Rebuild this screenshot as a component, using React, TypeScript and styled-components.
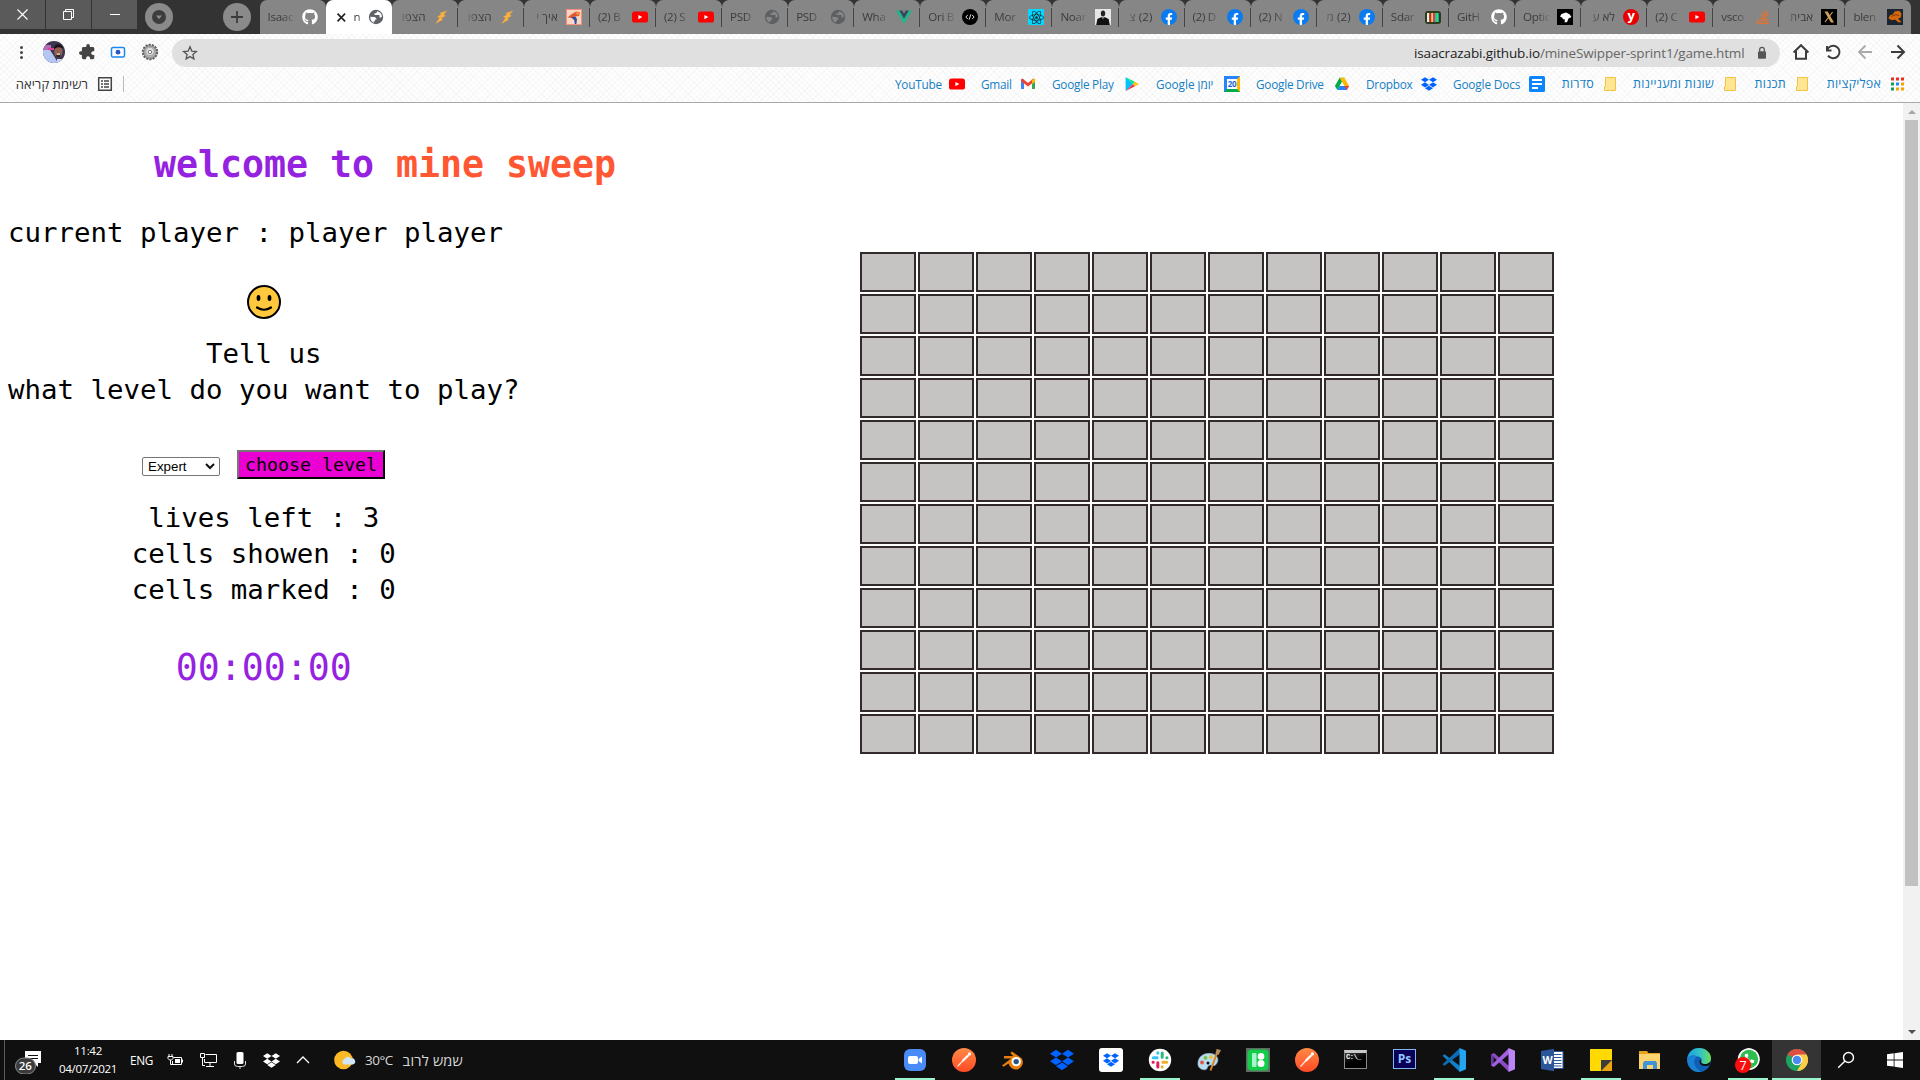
import React from 'react';
import styled, { createGlobalStyle, css } from 'styled-components';
import { FaGithub, FaFacebookF, FaReact, FaDropbox, FaStackOverflow } from 'react-icons/fa';

const ui = `"Open Sans", "Noto Sans", "DejaVu Sans", sans-serif`;
const mono = `Consolas, "DejaVu Sans Mono", monospace`;

const GlobalStyle = createGlobalStyle`
  * { box-sizing: border-box; }
  html, body { margin: 0; padding: 0; background: #fff; }
  body { width: 1920px; height: 1080px; overflow: hidden; }
  svg { display: block; flex: none; }
`;

const Screen = styled.div`
  width: 1920px;
  height: 1080px;
  display: flex;
  flex-direction: column;
  font-family: ${ui};
  overflow: hidden;
`;

/* ---------- window frame and tabs ---------- */

const TabStrip = styled.div`
  height: 34px;
  display: flex;
  background: #333;
`;
const FrameButtons = styled.div`
  display: flex;
  gap: 1px;
  width: 137px;
  height: 29px;
`;
const FrameButton = styled.div`
  flex: 1;
  display: flex;
  align-items: center;
  justify-content: center;
  background: #5a5a5a;
`;
const RoundButtons = styled.div`
  width: 122px;
  display: flex;
  justify-content: space-between;
  padding: 3px 8px;
`;
const RoundButton = styled.div`
  width: 28px;
  height: 28px;
  border-radius: 50%;
  background: #8a8a8a;
  display: flex;
  align-items: center;
  justify-content: center;
`;
const Tabs = styled.div`
  display: flex;
  width: 1652px;
  margin-left: 0.5px;
`;
const Tab = styled.div<{ $active?: boolean; $line?: boolean }>`
  flex: 1 1 0;
  min-width: 0;
  height: 34px;
  display: flex;
  align-items: center;
  justify-content: space-between;
  padding: 0 8px 0 8px;
  border-radius: 7px 7px 0 0;
  background: ${p => (p.$active ? '#fff' : '#868686')};
  ${p =>
    p.$line &&
    css`
      background: linear-gradient(#444, #444) 100% 8px / 1px 19px no-repeat, #868686;
    `}
`;
const TabTitle = styled.div<{ $rtl?: boolean; $w?: number }>`
  width: ${p => p.$w ?? 26}px;
  font-size: 11.6px;
  letter-spacing: ${p => (p.$rtl ? 0.1 : -0.3)}px;
  line-height: 18px;
  white-space: nowrap;
  color: #3c3c3c;
  direction: ${p => (p.$rtl ? 'rtl' : 'ltr')};
  mask-image: linear-gradient(${p => (p.$rtl ? 'to left' : 'to right')}, #000 55%, transparent 110%);
`;

/* ---------- toolbar ---------- */

const Chrome = styled.div`
  height: 69px;
  border-bottom: 1px solid #a9a9a9;
  background:
    repeating-linear-gradient(45deg, rgba(0, 0, 0, 0.025) 0 1px, transparent 1px 4px),
    repeating-linear-gradient(-45deg, rgba(0, 0, 0, 0.025) 0 1px, transparent 1px 4px),
    #fefefe;
`;
const Toolbar = styled.div`
  height: 36px;
  display: flex;
  align-items: center;
  padding: 0 14px 0 13px;
`;
const ToolbarLeft = styled.div`
  width: 159px;
  display: flex;
  align-items: center;
  gap: 14px;
`;
const Dots = styled.div`
  width: 16px;
  display: flex;
  flex-direction: column;
  align-items: center;
  gap: 2px;
`;
const Dot = styled.i`
  width: 3px;
  height: 3px;
  border-radius: 50%;
  background: #444;
`;
const Omnibox = styled.div`
  width: 1608px;
  height: 28px;
  margin-top: 2px;
  border-radius: 14px;
  background: #e0e0e0;
  display: flex;
  align-items: center;
  padding: 0 11px 0 10px;
`;
const Url = styled.div`
  margin-left: auto;
  margin-right: 11px;
  width: 330px;
  font-size: 13.5px;
  letter-spacing: -0.14px;
  line-height: 18px;
  padding-bottom: 1px;
  color: #666;
  white-space: nowrap;
  b { font-weight: 400; color: #222; }
`;
const ToolbarRight = styled.div`
  flex: 1;
  display: flex;
  align-items: center;
  justify-content: flex-end;
  gap: 14px;
`;
const Bookmarks = styled.div`
  height: 32px;
  display: flex;
  align-items: center;
  justify-content: flex-end;
  gap: 16px;
  padding: 0 15px 2px 14px;
  margin-top: -1px;
`;
const ReadingList = styled.div`
  display: flex;
  align-items: center;
  margin-right: auto;
  gap: 9px;
  font-size: 12px;
  color: #333;
`;
const Divider = styled.i`
  width: 1px;
  height: 16px;
  margin-left: 1px;
  background: #bbb;
`;
const Bookmark = styled.div`
  display: flex;
  align-items: center;
  gap: 8px;
`;
const Label = styled.span<{ $w: number; $rtl?: boolean; $ls?: number; $fs?: number }>`
  width: ${p => p.$w}px;
  font-size: ${p => p.$fs ?? (p.$rtl ? 12.5 : 11.8)}px;
  letter-spacing: ${p => p.$ls ?? (p.$rtl ? 0.2 : -0.25)}px;
  line-height: 16px;
  white-space: nowrap;
  direction: ${p => (p.$rtl ? 'rtl' : 'ltr')};
  color: ${p => (p.$fs ? '#333' : '#1580c4')};
`;

/* ---------- page ---------- */

const Page = styled.div`
  height: 937px;
  display: flex;
  background: #fff;
  font-family: ${mono};
  color: #000;
`;
const Side = styled.div`
  width: 860px;
  padding: 38px 0 0 8px;
`;
const Title = styled.h1`
  margin: 0;
  padding-left: 146px;
  font-size: 36.55px;
  line-height: 48px;
  color: #9522e0;
  white-space: nowrap;
  span { color: #ff5733; }
`;
const Player = styled.div`
  margin-top: 26px;
  font-size: 27.41px;
  line-height: 36px;
  white-space: nowrap;
`;
const Centered = styled.div<{ $top: number }>`
  width: 511.5px;
  margin-top: ${p => p.$top}px;
  display: flex;
  flex-direction: column;
  align-items: center;
  font-size: 27.41px;
  line-height: 36px;
  white-space: pre;
`;
const Controls = styled.div`
  width: 511.5px;
  margin-top: 42px;
  padding-left: 134px;
  height: 29px;
  display: flex;
  align-items: flex-start;
  gap: 17px;
`;
const Select = styled.div`
  width: 78px;
  height: 19px;
  margin-top: 7px;
  padding: 0 4px 0 5px;
  border: 1px solid #767676;
  border-radius: 2px;
  display: flex;
  align-items: center;
  justify-content: space-between;
  font: 13.33px "Liberation Sans", Arial, sans-serif;
`;
const LevelButton = styled.button`
  width: 148px;
  height: 29px;
  padding: 0;
  border: 2px outset #767676;
  border-color: #767676 #2c2c2c #2c2c2c #767676;
  border-radius: 0;
  background: #eb00d3;
  color: #000;
  font-family: ${mono};
  font-size: 18.27px;
  line-height: 24px;
`;
const Timer = styled.div`
  width: 511.5px;
  margin-top: 36px;
  text-align: center;
  font-size: 36.55px;
  line-height: 48px;
  color: #9522e0;
`;
const BoardArea = styled.div`
  flex: 1;
  padding-top: 149px;
`;
const Board = styled.div`
  display: grid;
  grid-template-columns: repeat(12, 56px);
  grid-auto-rows: 40px;
  gap: 2px;
`;
const Cell = styled.div`
  border: 2px solid #332b2b;
  background: #c6c4c2;
`;
const ScrollBar = styled.div`
  width: 17px;
  display: flex;
  flex-direction: column;
  align-items: center;
  justify-content: space-between;
  background: #f1f1f1;
`;
const ScrollTop = styled.div`
  display: flex;
  flex-direction: column;
  align-items: center;
`;
const Arrow = styled.div`
  height: 17px;
  display: flex;
  align-items: center;
`;
const Thumb = styled.div`
  width: 13px;
  height: 766px;
  background: #c1c1c1;
`;

/* ---------- taskbar ---------- */

const Taskbar = styled.div`
  height: 40px;
  display: flex;
  background: #101010;
  color: #fff;
`;
const Tray = styled.div`
  width: 890px;
  margin-left: 4px;
  border-left: 1px solid #5b5b5b;
  display: flex;
  align-items: center;
`;
const Notice = styled.div`
  width: 44px;
  padding-left: 9px;
`;
const Clock = styled.div`
  width: 74px;
  text-align: center;
  font-size: 11.6px;
  letter-spacing: -0.35px;
  line-height: 18px;
  padding-bottom: 1px;
  margin-left: 2px;
`;
const Lang = styled.div`
  width: 42px;
  padding-left: 5px;
  font-size: 11.8px;
  letter-spacing: -0.35px;
`;
const TrayIcons = styled.div`
  display: flex;
  align-items: center;
  gap: 16px;
`;
const Weather = styled.div`
  display: flex;
  align-items: center;
  margin-left: 24px;
  font-size: 13.5px;
  letter-spacing: -0.5px;
  color: #d8d8d8;
`;
const Degrees = styled.span`
  width: 29px;
  margin: 0 8px 0 9px;
`;
const Forecast = styled.span`
  direction: rtl;
  font-size: 14.5px;
  letter-spacing: 0.2px;
  width: 61px;
  margin-top: 1px;
  white-space: nowrap;
`;
const Apps = styled.div`
  display: flex;
  width: 1029px;
  margin-left: -4px;
`;
const AppSlot = styled.div<{ $open?: boolean; $current?: boolean }>`
  width: 49px;
  height: 40px;
  display: flex;
  align-items: center;
  justify-content: center;
  background:
    linear-gradient(#9df5cf, #9df5cf) 50% 100% / ${p => (p.$current ? 49 : p.$open ? 40 : 0)}px 2px no-repeat,
    ${p => (p.$current ? '#343434' : 'transparent')};
`;

/* ---------- icons ---------- */

const Globe = ({ c = '#5f6368', land = '#fff' }) => (
  <svg width="16" height="16" viewBox="0 0 16 16">
    <circle cx="8" cy="8" r="7.2" fill={c} />
    <path d="M2.300 7.800 6.500 8q2.300.6 2 2.400H7v1.800H5.800v1.500A6 6 0 0 1 2.300 7.800ZM9.200 2.300l-1 1.900H6.500V6h5v2.600h1.600l.8-1A6 6 0 0 0 9.200 2.300Z" fill={land} />
  </svg>
);
const Bolt = () => (
  <svg width="16" height="16" viewBox="0 0 16 16">
    <path d="M13.4 1.6 5.8 4.1l1.2 1.6-3.8 1.8 2.2 1.6L1.4 14.8l7.4-4.1-1.3-1.6 4.2-2-2-1.6Z" fill="#fbb03b" />
  </svg>
);
const YouTube = () => (
  <svg width="16" height="16" viewBox="0 0 16 16">
    <rect y="2.6" width="16" height="11" rx="2.6" fill="#f00" />
    <path d="M6.4 5.9v4.4l3.9-2.2Z" fill="#fff" />
  </svg>
);
const Vue = () => (
  <svg width="16" height="16" viewBox="0 0 16 16">
    <path d="M0 1.6h3.2L8 9.8l4.8-8.2H16L8 15Z" fill="#1fb88a" />
    <path d="M3.2 1.6h3L8 4.6l1.8-3h3L8 9.8Z" fill="#34495e" />
  </svg>
);
const Fox = () => (
  <svg width="16" height="16" viewBox="0 0 16 16">
    <rect width="16" height="16" fill="#f6907c" />
    <rect x="1" y="1" width="14" height="14" fill="#fbd5c4" />
    <path d="M1.500 8.600 6 5l4-2.500 4 1L13 7l-4 .5L6 9Z" fill="#e2562b" />
    <path d="M9 3.500h4.500L12 6.500Z" fill="#f59b35" />
    <path d="M5 8.500 9.400 7.500 11 10l-.6 5H8.800l-.6-4Z" fill="#2b4f9e" />
  </svg>
);
const CodeDot = () => (
  <svg width="16" height="16" viewBox="0 0 16 16">
    <circle cx="8" cy="8" r="8" fill="#000" />
    <path d="M5.8 5.9 3.9 8l1.9 2.1M10.2 5.9 12.1 8l-1.9 2.1M8.8 5.4 7.2 10.6" stroke="#ddd" fill="none" />
  </svg>
);
const IconTile = styled.div<{ $bg: string; $c: string; $round?: boolean }>`
  width: 16px;
  height: 16px;
  flex: none;
  display: flex;
  align-items: center;
  justify-content: center;
  border-radius: ${p => (p.$round ? '50%' : '1px')};
  background: ${p => p.$bg};
  color: ${p => p.$c};
  overflow: hidden;
`;
const ReactTile = () => (
  <IconTile $bg="#00d8ff" $c="#17222b"><FaReact size={15} /></IconTile>
);
const FacebookTile = styled(IconTile)`
  padding-top: 3px;
`;
const Facebook = () => (
  <FacebookTile $bg="#0a7cf0" $c="#fff" $round><FaFacebookF size={12} /></FacebookTile>
);
const Person = () => (
  <svg width="16" height="16" viewBox="0 0 16 16">
    <rect width="16" height="16" fill="#e6e6e6" />
    <ellipse cx="8" cy="4.600" rx="2.200" ry="3" fill="#222" />
    <path d="M1.2 16 2.400 10 6 8.200h4l3.600 1.800 1.200 6Z" fill="#111" />
    <path d="M7.3 8.2h1.4L8 10.6Z" fill="#eee" />
  </svg>
);
const Tv = () => (
  <svg width="16" height="16" viewBox="0 0 16 16">
    <rect y="2" width="16" height="13" rx="3" fill="#2c3b1c" />
    <path d="M2 4h2.4v9H2Z" fill="#eee" /><path d="M4.4 4h1.8v9H4.4Z" fill="#e02020" /><path d="M6.2 4H8v9H6.2Z" fill="#e8e020" /><path d="M8 4h2v9H8Z" fill="#e020c0" /><path d="M10 4h2v9h-2Z" fill="#2ad82a" /><path d="M12 4h1.6v9H12Z" fill="#20d8d8" />
  </svg>
);
const Leaf = () => (
  <svg width="16" height="16" viewBox="0 0 16 16">
    <rect width="16" height="16" fill="#000" />
    <path d="M3 7.600 4.500 5 9 3.500l3.500 1.800L14.500 8l-3 1.500-1.500 3.700H7.500L8 10.500l-2-.3-.6-1.400Z" fill="#fff" />
  </svg>
);
const YTile = styled.div`
  width: 16px;
  height: 16px;
  flex: none;
  border-radius: 50%;
  background: #e60000;
  color: #fff;
  text-align: center;
  font: bold 13px/13px "Open Sans", sans-serif;
`;
const XTile = () => (
  <svg width="16" height="16" viewBox="0 0 16 16">
    <rect width="16" height="16" fill="#000" />
    <path d="M4.500 3h1.800L12 13h-1.800ZM11.6 3 4 13" stroke="#d5a45c" strokeWidth="1.100" fill="#d5a45c" />
  </svg>
);
const BlendTile = () => (
  <svg width="16" height="16" viewBox="0 0 16 16">
    <rect width="16" height="16" fill="#1c2430" />
    <path d="M1.400 9.600 3 6.200l3-1 1.500-2.800 4.500-.6 2.400 2.400-.4 4-3 1.600 3.600 3.200-3 .4L8 10.600l-3 .6Z" fill="#d3690c" />
    <path d="M4.4 7.400 9 5.600l3 1" stroke="#843a04" fill="none" />
  </svg>
);
const GitHub = () => <FaGithub size={16} color="#fff" />;
const StackOverflow = () => <FaStackOverflow size={16} color="#e8722a" />;

const tabs: { t: string; rtl?: boolean; icon: React.ReactNode; active?: boolean }[] = [
  { t: 'Isaac', icon: <GitHub /> },
  { t: 'n', icon: <Globe />, active: true },
  { t: 'הצפו', rtl: true, icon: <Bolt /> },
  { t: 'הצפו', rtl: true, icon: <Bolt /> },
  { t: 'איך י', rtl: true, icon: <Fox /> },
  { t: '(2) B', icon: <YouTube /> },
  { t: '(2) S', icon: <YouTube /> },
  { t: 'PSD', icon: <Globe c="#5c6063" land="#868686" /> },
  { t: 'PSD', icon: <Globe c="#5c6063" land="#868686" /> },
  { t: 'Wha', icon: <Vue /> },
  { t: 'Ori B', icon: <CodeDot /> },
  { t: 'Mor', icon: <ReactTile /> },
  { t: 'Noar', icon: <Person /> },
  { t: '(2) צ', rtl: true, icon: <Facebook /> },
  { t: '(2) D', icon: <Facebook /> },
  { t: '(2) N', icon: <Facebook /> },
  { t: '(2) מ', rtl: true, icon: <Facebook /> },
  { t: 'Sdar', icon: <Tv /> },
  { t: 'GitH', icon: <GitHub /> },
  { t: 'Optic', icon: <Leaf /> },
  { t: 'לא ע', rtl: true, icon: <YTile>y</YTile> },
  { t: '(2) C', icon: <YouTube /> },
  { t: 'vsco', icon: <StackOverflow /> },
  { t: 'אבית', rtl: true, icon: <XTile /> },
  { t: 'blen', icon: <BlendTile /> },
];

const Folder = () => (
  <svg width="16" height="16" viewBox="0 0 16 16">
    <path d="M3.5 1.5h10v13h-11v-4h1Z" fill="#ffe694" stroke="#f4c245" />
  </svg>
);
const Gmail = () => (
  <svg width="16" height="16" viewBox="0 0 16 16">
    <path d="M1 3.6h3V13H1Z" fill="#4285f4" /><path d="M12 3.6h3V13h-3Z" fill="#34a853" />
    <path d="M1 5V3.4L2.4 2.6 8 7l5.6-4.4L15 3.4V5L8 10.4Z" fill="#ea4335" /><path d="M12 4.3 13.8 2.6 15 3.6V6l-3 2Z" fill="#fbbc04" />
  </svg>
);
const Play = () => (
  <svg width="16" height="16" viewBox="0 0 16 16">
    <path d="M1.6 1v14L9 8Z" fill="#00c3ff" /><path d="M1.6 1 11 6 9 8Z" fill="#00e676" /><path d="M1.6 15 11 10.2 9 8Z" fill="#f43249" /><path d="m11 6 4 2.1-4 2.1L9 8Z" fill="#ffc107" />
  </svg>
);
const CalBox = styled.div`
  width: 16px;
  height: 16px;
  border: 3px solid #2684fc;
  border-right-color: #ffba00;
  border-bottom-color: #00ac47;
  background: #fff;
  color: #1a66d8;
  font: bold 8px/10px "Open Sans", sans-serif;
  letter-spacing: -0.3px;
  text-align: center;
`;
const Drive = () => (
  <svg width="16" height="16" viewBox="0 0 16 16">
    <path d="M5.6 1.8h4.8L8 6 3.3 14 .9 10Z" fill="#00ac47" /><path d="M5.6 1.8h4.8L15.1 10h-4.8Z" fill="#ffba00" /><path d="M5.6 10h9.5l-2.4 4H3.3Z" fill="#2684fc" /><path d="M10.3 10h4.8l-2.4 4Z" fill="#ea4335" /><path d="M8 6 5.6 10h4.7Z" fill="#fff" />
  </svg>
);
const Docs = () => (
  <svg width="16" height="16" viewBox="0 0 16 16">
    <rect width="16" height="16" rx="1.5" fill="#0a84ff" />
    <path d="M3 4h10M3 8h10M3 12h6" stroke="#fff" strokeWidth="1.8" />
  </svg>
);
const AppsGrid = () => (
  <svg width="16" height="16" viewBox="0 0 16 16">
    {['#f02a1d', '#f02a1d', '#f02a1d', '#159a57', '#1a8cf0', '#f5a400', '#159a57', '#f5a400', '#f5a400'].map((c, i) => (
      <rect key={i} x={2 + (i % 3) * 5} y={1.5 + Math.floor(i / 3) * 5} width="3" height="3" fill={c} />
    ))}
  </svg>
);

const bookmarks: { t: string; w: number; rtl?: boolean; ls?: number; icon: React.ReactNode }[] = [
  { t: 'YouTube', w: 46, icon: <YouTube /> },
  { t: 'Gmail', w: 31, icon: <Gmail /> },
  { t: 'Google Play', w: 64, icon: <Play /> },
  { t: 'Google יומן', w: 60, ls: -0.05, icon: <CalBox>20</CalBox> },
  { t: 'Google Drive', w: 70, icon: <Drive /> },
  { t: 'Dropbox', w: 47, icon: <FaDropbox size={16} color="#0062ff" /> },
  { t: 'Google Docs', w: 68, ls: -0.15, icon: <Docs /> },
  { t: 'סדרות', w: 33, rtl: true, icon: <Folder /> },
  { t: 'שונות ומעניינות', w: 80, rtl: true, icon: <Folder /> },
  { t: 'תכנות', w: 32, rtl: true, icon: <Folder /> },
  { t: 'אפליקציות', w: 55, rtl: true, icon: <AppsGrid /> },
];

const Avatar = () => (
  <svg width="22" height="22" viewBox="0 0 22 22">
    <clipPath id="av"><circle cx="11" cy="11" r="11" /></clipPath>
    <g clipPath="url(#av)">
      <rect width="22" height="22" fill="#3d3550" />
      <path d="M0 4h8v5H0Z" fill="#b46cb4" /><path d="M5 7h6v2H5Z" fill="#e0409a" />
      <path d="M0 9h7l4 6 4 7H0Z" fill="#b4c6f2" />
      <path d="M14 18h8v4h-8Z" fill="#c8d4f4" />
      <ellipse cx="15.4" cy="10.6" rx="4.2" ry="6" fill="#8d6152" />
      <path d="M11 8.500C10 2 20 1 20 8 17 5.500 14 5.500 11 8.500Z" fill="#17121a" />
      <path d="M13 13.2q2.4 2 4.8 0l-.6 2.8h-3.6Z" fill="#2c1c1c" /><path d="M13.6 13.1h3.4" stroke="#fff" />
    </g>
  </svg>
);
const Puzzle = () => (
  <svg width="16" height="16" viewBox="1 1 22 22">
    <path fill="#444" transform="translate(24 0) scale(-1 1)" d="M20.5 11H19V7c0-1.100-.9-2-2-2h-4V3.500a2.500 2.500 0 0 0-5 0V5H4c-1.100 0-1.990.9-1.990 2v3.800H3.500c1.490 0 2.700 1.210 2.700 2.700s-1.210 2.700-2.700 2.700H2V20c0 1.100.9 2 2 2h3.800v-1.500c0-1.490 1.210-2.700 2.700-2.700s2.700 1.210 2.700 2.700V22H17c1.100 0 2-.9 2-2v-4h1.500a2.500 2.500 0 0 0 0-5Z" />
  </svg>
);
const Camera = () => (
  <svg width="18" height="18" viewBox="0 0 18 18">
    <rect x="2.500" y="4.500" width="13" height="9.500" rx="1.600" fill="#fff" stroke="#1688f0" strokeWidth="1.500" />
    <circle cx="9" cy="9.200" r="2.400" fill="#2c55c8" />
  </svg>
);
const Gear = () => (
  <svg width="18" height="18" viewBox="0 0 18 18">
    <circle cx="9" cy="9" r="7.200" fill="none" stroke="#5e5e5e" strokeWidth="2" strokeDasharray="2.200 1.030" />
    <circle cx="9" cy="9" r="6.300" fill="#b4b4b4" stroke="#666" strokeWidth=".8" />
    <circle cx="9" cy="8.500" r="4.200" fill="#dedede" stroke="#999" strokeWidth=".8" />
    <circle cx="9" cy="9" r="1.700" fill="#fff" stroke="#777" />
  </svg>
);
const line = { fill: 'none', stroke: '#3c3c3c', strokeWidth: 2 };

/* taskbar pictures */
const Postman = () => (
  <svg width="24" height="24" viewBox="0 0 24 24">
    <defs><linearGradient id="pm" x2="0" y2="1"><stop stopColor="#ff8a45" /><stop offset="1" stopColor="#ff4a26" /></linearGradient></defs>
    <circle cx="12" cy="12" r="12" fill="url(#pm)" />
    <path d="m5.500 18.500 6-6.500 5.500-5" stroke="#ffe1d5" strokeWidth="1.300" fill="none" /><path d="m10.500 13 5.500-5.500" stroke="#fff" strokeWidth="2.200" />
    <circle cx="17.400" cy="5.900" r="1.600" fill="#fff" />
  </svg>
);
const Zoom = () => (
  <svg width="24" height="24" viewBox="0 0 24 24">
    <rect x="1" y="1" width="22" height="22" rx="6" fill="#4a8cf7" />
    <rect x="5" y="8" width="10" height="8" rx="2" fill="#fff" /><path d="m15.600 11 3.400-2.600v7.200L15.600 13Z" fill="#fff" />
  </svg>
);
const Blender = () => (
  <svg width="24" height="24" viewBox="0 0 24 24">
    <path d="M1 17.500 10 10.400H3V8h9L9.400 5 11 3.400l9.600 6.800A7.200 7.200 0 1 1 7.600 15.500l-5 3.200Z" fill="#e87d0d" />
    <circle cx="15.200" cy="13.600" r="4.700" fill="#fff" /><circle cx="15.200" cy="13.600" r="2.700" fill="#265787" />
  </svg>
);
const DropboxTile = styled.div`
  width: 24px;
  height: 24px;
  border-radius: 3px;
  background: #fff;
  color: #0062ff;
  display: flex;
  align-items: center;
  justify-content: center;
`;
const Slack = () => (
  <svg width="24" height="24" viewBox="0 0 24 24">
    <circle cx="12" cy="12" r="11.200" fill="#fff" />
    <g strokeWidth="3" strokeLinecap="round">
      <path d="M5.300 9.800h3.900M9.800 4.800v.4" stroke="#36c5f0" /><path d="M14.200 5v4.200M18.800 9.800h.2" stroke="#2eb67d" />
      <path d="M14.800 14.200h3.900M14.200 18.800v.3" stroke="#ecb22e" /><path d="M9.800 14.800v4.200M5 14.200h.3" stroke="#e01e5a" />
    </g>
  </svg>
);
const Paint = () => (
  <svg width="24" height="24" viewBox="0 0 24 24">
    <path d="M1 17C0 9 7 4.500 14 5.500s9 7 4.500 11.500c-2 2-4-1-6.500.5s-1 4-4 4.300S1.400 20 1 17Z" fill="#b9dcee" stroke="#7fa9c2" strokeWidth=".7" />
    <circle cx="5" cy="14.500" r="1.900" fill="#e2554a" /><circle cx="8.500" cy="9.800" r="1.900" fill="#78be42" /><circle cx="14" cy="9" r="1.900" fill="#f0c22c" /><circle cx="11" cy="15" r="1.500" fill="#111" />
    <path d="M13.500 22.500 20 5" stroke="#d98329" strokeWidth="2" /><path d="m18.500 6 1-5 4.500 1-2.600 5Z" fill="#b98d5c" />
  </svg>
);
const Icons8 = () => (
  <svg width="24" height="24" viewBox="0 0 24 24">
    <rect width="24" height="24" fill="#5e6d62" /><rect x="1.500" y="1.500" width="21" height="21" rx="4" fill="#14cc4a" />
    <rect x="6" y="5" width="4.500" height="14" rx="1" fill="#a6f5cf" /><circle cx="15" cy="8.400" r="3.300" fill="#fff" /><circle cx="15" cy="15.400" r="3.500" fill="#fff" />
  </svg>
);
const CmdBox = styled.div`
  width: 23px;
  height: 19px;
  margin-top: -1px;
  border: 1px solid #8b8b8b;
  border-top: 3px solid #c9c9c9;
  background: linear-gradient(160deg, #3a3a3a, #000 50%);
  font: bold 7px/7px "Liberation Mono", monospace;
  letter-spacing: -0.5px;
  padding: 1px;
`;
const PsBox = styled.div`
  width: 23px;
  height: 20px;
  margin-top: -3px;
  border: 1px solid #7fb8f5;
  background: #0a0057;
  color: #8fc8ff;
  font: bold 12px/17px "Open Sans", sans-serif;
  text-align: center;
`;
const Code = () => (
  <svg width="24" height="24" viewBox="0 0 24 24">
    <path d="m.5 7.800 2-1.600L18 18v6Z" fill="#1080c8" /><path d="M.5 16.200 18 0v6L2.500 17.800Z" fill="#0d6cb4" /><path d="m17.500 0 6.500 2.800v18.400L17.500 24Z" fill="#25a5f0" />
  </svg>
);
const VisualStudio = () => (
  <svg width="24" height="24" viewBox="0 0 24 24">
    <path d="M0 6.500 3 5l15 13v6Z" fill="#8a4bc4" /><path d="M0 6.500 2.600 8v8L0 17.500Z" fill="#6c3aa5" /><path d="M0 17.500 18 0v6L3 19Z" fill="#9f5fe0" /><path d="m17.500 0 6.500 2.800v18.400L17.500 24Z" fill="#ba85f5" />
  </svg>
);
const Word = () => (
  <svg width="24" height="24" viewBox="0 0 24 24">
    <path d="M12 3.500h11v17H12Z" fill="#fff" stroke="#2b579a" />
    <path d="M13 6.500h8.500M13 9.500h8.500M13 12.500h8.500M13 15.500h8.500M13 18h8.500" stroke="#2b579a" />
    <path d="M1 3 14 .8v22.400L1 21Z" fill="#2b579a" />
    <text x="7.600" y="16" textAnchor="middle" fill="#fff" fontSize="10.500" fontWeight="700" fontFamily="Open Sans">W</text>
  </svg>
);
const Sticky = () => (
  <svg width="24" height="24" viewBox="0 0 24 24">
    <path d="M1 1h22v22H1Z" fill="#ffd900" /><path d="M12 12h11v11H12Z" fill="#eda50c" /><path d="M12 12h11L12 23Z" fill="#3c3c3c" />
  </svg>
);
const Files = () => (
  <svg width="24" height="24" viewBox="0 0 24 24">
    <path d="M1 3h8l1.500 2H22v4H1Z" fill="#e3a21a" /><path d="M1 6h21v15H1Z" fill="#fcd46f" />
    <path d="M5 21v-6l1.500-2h11l1.500 2v6h-4v-4H9v4Z" fill="#3f94d8" />
  </svg>
);
const Edge = () => (
  <svg width="24" height="24" viewBox="0 0 24 24">
    <defs><linearGradient id="eg"><stop stopColor="#1b9de2" /><stop offset=".6" stopColor="#36c6c0" /><stop offset="1" stopColor="#6ee04e" /></linearGradient></defs>
    <circle cx="12" cy="12" r="12" fill="#0f5fb4" />
    <path d="M.2 11C1.500 3 7 0 12 0c7 0 12 5 12 10 0 4-3 6-6 6-3.500 0-4.500-1.500-3.500-3 1-2-1-4.500-4-4.500C6 6.500 1.500 8 .2 11Z" fill="url(#eg)" />
    <path d="M.2 10.500C2 7.500 7 6.500 10.500 8.500 7 10 6.500 14 8 17.500c1.200 3 4 5.300 7 6C6 26 .2 19 .2 10.500Z" fill="#1a80d2" />
    <path d="M13 11.500c-1.500 3 .5 6.500 5 6.500 2 0 3.500-.4 4.700-1l.8-3.500C22 15.500 20 16 18 16c-3 0-4.500-1.300-3.600-3Z" fill="#101010" />
  </svg>
);
const Whatsapp = () => (
  <svg width="26" height="26" viewBox="0 0 26 26">
    <path d="m3 23 1.500-5A11 11 0 1 1 9 22Z" fill="#fff" /><circle cx="14" cy="12" r="9.200" fill="#2ebd4f" />
    <path d="M10 7c-1.500 3 3.500 10 8.500 9l1-2.500-3-1.300-1.200 1.200-3-3L13.500 9l-1-2.500Z" fill="#fff" />
    <circle cx="8" cy="18" r="8" fill="#fb0d0d" />
    <text x="8" y="22.500" textAnchor="middle" fill="#fff" fontSize="12.500" fontFamily="Open Sans">7</text>
  </svg>
);
const ChromeLogo = () => (
  <svg width="22" height="22" viewBox="0 0 24 24">
    <circle cx="12" cy="12" r="12" fill="#1da462" />
    <path d="M12 12 1.600 6A12 12 0 0 1 22.400 6Z" fill="#dd4f43" /><path d="M12 6h10.400A12 12 0 0 1 12 24l5.200-9Z" fill="#ffcd46" />
    <circle cx="12" cy="12" r="5.800" fill="#fff" /><circle cx="12" cy="12" r="4.600" fill="#4a8af4" />
  </svg>
);
const Search = () => (
  <svg width="18" height="18" viewBox="0 0 18 18"><circle cx="11.500" cy="6.500" r="5" fill="none" stroke="#fff" strokeWidth="1.400" /><path d="M8 10 1.200 16.800" stroke="#fff" strokeWidth="1.400" /></svg>
);
const Windows = () => (
  <svg width="16" height="16" viewBox="0 0 16 16"><path d="M0 2.200 6.700 1.300v6.200H0ZM7.500 1.200 16 0v7.500H7.500ZM0 8.400h6.700v6.200L0 13.700ZM7.500 8.400H16V16l-8.500-1.200Z" fill="#fff" /></svg>
);

const apps: { icon: React.ReactNode; open?: boolean; current?: boolean }[] = [
  { icon: <Zoom />, open: true },
  { icon: <Postman /> },
  { icon: <Blender /> },
  { icon: <FaDropbox size={24} color="#0062ff" /> },
  { icon: <DropboxTile><FaDropbox size={16} /></DropboxTile> },
  { icon: <Slack />, open: true },
  { icon: <Paint /> },
  { icon: <Icons8 /> },
  { icon: <Postman /> },
  { icon: <CmdBox>C:\_</CmdBox> },
  { icon: <PsBox>Ps</PsBox> },
  { icon: <Code />, open: true },
  { icon: <VisualStudio /> },
  { icon: <Word /> },
  { icon: <Sticky />, open: true },
  { icon: <Files /> },
  { icon: <Edge /> },
  { icon: <Whatsapp />, open: true },
  { icon: <ChromeLogo />, current: true },
  { icon: <Search /> },
  { icon: <Windows /> },
];

const cells = Array.from({ length: 144 }, (_, i) => i);

export default function App() {
  return (
    <Screen>
      <GlobalStyle />
      <TabStrip>
        <FrameButtons>
          <FrameButton><svg width="11" height="11" viewBox="0 0 11 11"><path d="m.5.5 10 10m0-10-10 10" stroke="#fff" strokeWidth="1.100" /></svg></FrameButton>
          <FrameButton><svg width="11" height="11" viewBox="0 0 11 11"><path d="M.5 2.500h8v8h-8ZM2.500 2V.5h8v8H9" stroke="#fff" fill="none" /></svg></FrameButton>
          <FrameButton><svg width="10" height="11" viewBox="0 0 10 11"><path d="M0 5.500h10" stroke="#fff" /></svg></FrameButton>
        </FrameButtons>
        <RoundButtons>
          <RoundButton><svg width="14" height="14" viewBox="0 0 14 14"><circle cx="7" cy="7" r="7" fill="#3c3c3c" /><path d="M4 5.500h6L7 9.200Z" fill="#8a8a8a" /></svg></RoundButton>
          <RoundButton><svg width="12" height="12" viewBox="0 0 12 12"><path d="M6 0v12M0 6h12" stroke="#3c3c3c" strokeWidth="1.800" /></svg></RoundButton>
        </RoundButtons>
        <Tabs>
          {tabs.map((t, i) => (
            <Tab key={i} $active={t.active} $line={i > 1 && i < tabs.length - 1}>
              {t.active && <svg width="14" height="9" viewBox="0 0 14 9"><path d="m3.500.7 7.600 7.600m0-7.600L3.500 8.300" stroke="#222" strokeWidth="1.700" /></svg>}
              <TabTitle $rtl={t.rtl} $w={t.active ? 8 : undefined}>{t.t}</TabTitle>
              {t.icon}
            </Tab>
          ))}
        </Tabs>
      </TabStrip>

      <Chrome>
        <Toolbar>
          <ToolbarLeft>
            <Dots><Dot /><Dot /><Dot /></Dots>
            <Avatar />
            <Puzzle />
            <Camera />
            <Gear />
          </ToolbarLeft>
          <Omnibox>
            <svg width="16" height="16" viewBox="0 0 16 16"><path d="m8 1.800 1.800 4.300 4.600.4-3.500 3 1 4.500L8 11.600 4.100 14l1-4.500-3.500-3 4.600-.4Z" fill="none" stroke="#555" strokeWidth="1.300" /></svg>
            <Url><b>isaacrazabi.github.io</b>/mineSwipper-sprint1/game.html</Url>
            <svg width="14" height="14" viewBox="0 0 14 14"><rect x="3" y="5.200" width="8" height="7.600" rx="1" fill="#555" /><path d="M4.700 5.500V3.600a2.300 2.300 0 0 1 4.600 0v1.900" fill="none" stroke="#555" strokeWidth="1.300" /></svg>
          </Omnibox>
          <ToolbarRight>
            <svg width="18" height="18" viewBox="0 0 18 18"><path d="M1.600 9.500 9 2.200l7.400 7.300M4 8v7.700h10V8" {...line} /></svg>
            <svg width="18" height="18" viewBox="0 0 18 18"><path d="M3 3v4.500h4.500M3.200 7A6.300 6.300 0 1 1 4 12.600" {...line} /></svg>
            <svg width="18" height="18" viewBox="0 0 18 18"><path d="M16 9H3m6.500-6.500L3 9l6.500 6.500" {...line} stroke="#aaa" strokeWidth="1.800" /></svg>
            <svg width="18" height="18" viewBox="0 0 18 18"><path d="M3 9h13M9.500 2.500 16 9l-6.500 6.500" {...line} /></svg>
          </ToolbarRight>
        </Toolbar>
        <Bookmarks>
          <ReadingList>
            <Label $w={74} $rtl $fs={13} $ls={0.05}>רשימת קריאה</Label>
            <svg width="16" height="16" viewBox="0 0 16 16"><path d="M1.700 1.700h12.600v12.600H1.700Z" fill="none" stroke="#444" strokeWidth="1.500" /><path d="M4 5h2M4 8h2M4 11h2M7 5h5M7 8h5M7 11h5" stroke="#444" strokeWidth="1.600" /></svg>
            <Divider />
          </ReadingList>
          {bookmarks.map(b => (
            <Bookmark key={b.t}>
              <Label $w={b.w} $rtl={b.rtl} $ls={b.ls}>{b.t}</Label>
              {b.icon}
            </Bookmark>
          ))}
        </Bookmarks>
      </Chrome>

      <Page>
        <Side>
          <Title>welcome to <span>mine sweep</span></Title>
          <Player>current player : player player</Player>
          <Centered $top={34}>
            <svg width="34" height="34" viewBox="0 0 34 34">
              <circle cx="17" cy="17" r="16" fill="#ffc83d" stroke="#000" strokeWidth="2" />
              <ellipse cx="11.500" cy="13" rx="1.900" ry="2.900" /><ellipse cx="22.500" cy="13" rx="1.900" ry="2.900" />
              <path d="M10 22.500q7 4.500 14 0" fill="none" stroke="#000" strokeWidth="2.200" strokeLinecap="round" />
            </svg>
          </Centered>
          <Centered $top={17}>
            <span>Tell us</span>
            <span>what level do you want to play?</span>
          </Centered>
          <Controls>
            <Select>Expert<svg width="10" height="7" viewBox="0 0 10 7"><path d="m1 1 4 4 4-4" fill="none" stroke="#111" strokeWidth="2" /></svg></Select>
            <LevelButton>choose level</LevelButton>
          </Controls>
          <Centered $top={21}>
            <span>lives left : 3</span>
            <span>cells showen : 0</span>
            <span>cells marked : 0</span>
          </Centered>
          <Timer>00:00:00</Timer>
        </Side>
        <BoardArea>
          <Board>{cells.map(i => <Cell key={i} />)}</Board>
        </BoardArea>
        <ScrollBar>
          <ScrollTop>
            <Arrow><svg width="8" height="4" viewBox="0 0 8 4"><path d="M0 4 4 0l4 4Z" fill="#a3a3a3" /></svg></Arrow>
            <Thumb />
          </ScrollTop>
          <Arrow><svg width="8" height="4" viewBox="0 0 8 4"><path d="M0 0h8L4 4Z" fill="#505050" /></svg></Arrow>
        </ScrollBar>
      </Page>

      <Taskbar>
        <Tray>
          <Notice>
            <svg width="30" height="28" viewBox="0 0 30 28">
              <path d="M11 5h16v12h-3v4l-4-4h-9Z" fill="#fff" /><path d="M14 9.500h10M14 12.500h10" stroke="#101010" />
              <rect x="1.500" y="12" width="20" height="16" rx="8" fill="#3b3b3b" stroke="#8a8a8a" />
              <text x="11.300" y="24" textAnchor="middle" fill="#fff" fontSize="11.500" fontWeight="600" fontFamily="Open Sans">26</text>
            </svg>
          </Notice>
          <Clock>11:42<br />04/07/2021</Clock>
          <Lang>ENG</Lang>
          <TrayIcons>
            <svg width="17" height="14" viewBox="0 0 17 14"><path d="M6.500 4.500h8v7h-9V8M15.500 6.500v3M2 1v2.500M5 1v2.500M1 3.500h5v2L4.500 7h-2L1 5.500ZM3.500 7v4.500H6" fill="none" stroke="#fff" /><path d="M8 6h5v4H8Z" fill="#fff" /></svg>
            <svg width="17" height="14" viewBox="0 0 17 14"><path d="M5.500 1.500h11v8h-12V6M.5.500h4v4h-4ZM2.500 4.500v8H5M10 10v3M6 13.500h8" fill="none" stroke="#fff" /></svg>
            <svg width="14" height="17" viewBox="0 0 14 17"><rect x="3.500" width="7" height="12" rx="1.500" fill="#fff" /><path d="M1.500 9v3q0 2.500 3 2.500h5q3 0 3-2.500V9M7 14.500V17" fill="none" stroke="#ddd" /></svg>
            <FaDropbox size={17} />
            <svg width="14" height="8" viewBox="0 0 14 8"><path d="m1 7 6-6 6 6" fill="none" stroke="#fff" strokeWidth="1.300" /></svg>
          </TrayIcons>
          <Weather>
            <svg width="22" height="20" viewBox="0 0 22 20"><circle cx="9.500" cy="10" r="9.300" fill="#fcb926" /><path d="M10 14.500a3 3 0 0 1 .5-5.500 3.600 3.600 0 0 1 6.500-.5 3 3 0 0 1 2 6Z" fill="#cfe6fb" /></svg>
            <Degrees>30°C</Degrees>
            <Forecast>שמש לרוב</Forecast>
          </Weather>
        </Tray>
        <Apps>
          {apps.map((a, i) => <AppSlot key={i} $open={a.open} $current={a.current}>{a.icon}</AppSlot>)}
        </Apps>
      </Taskbar>
    </Screen>
  );
}
